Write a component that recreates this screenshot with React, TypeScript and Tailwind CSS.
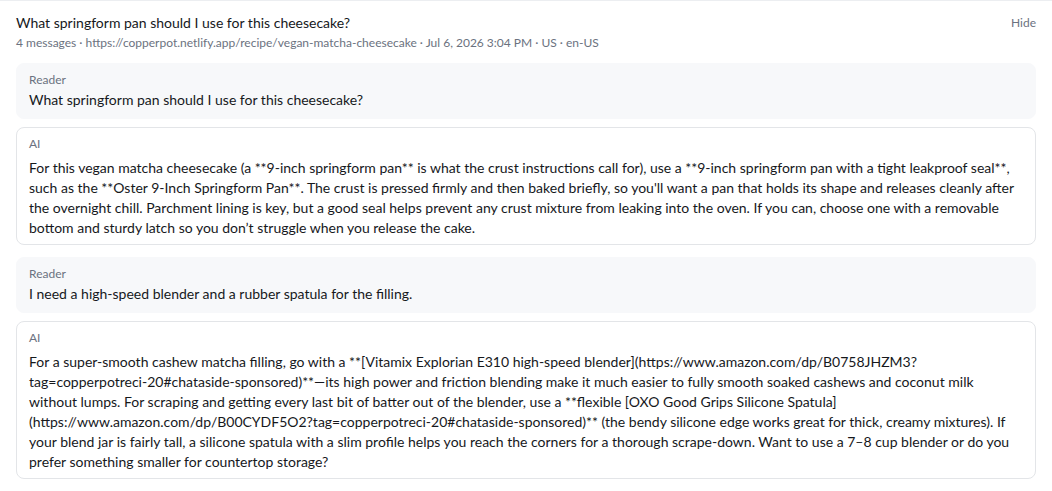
type Message = {
  role: 'Reader' | 'AI'
  text: string
}

const messages: Message[] = [
  {
    role: 'Reader',
    text: 'What springform pan should I use for this cheesecake?',
  },
  {
    role: 'AI',
    text: "For this vegan matcha cheesecake (a **9-inch springform pan** is what the crust instructions call for), use a **9-inch springform pan with a tight leakproof seal**, such as the **Oster 9-Inch Springform Pan**. The crust is pressed firmly and then baked briefly, so you'll want a pan that holds its shape and releases cleanly after the overnight chill. Parchment lining is key, but a good seal helps prevent any crust mixture from leaking into the oven. If you can, choose one with a removable bottom and sturdy latch so you don\u2019t struggle when you release the cake.",
  },
  {
    role: 'Reader',
    text: 'I need a high-speed blender and a rubber spatula for the filling.',
  },
  {
    role: 'AI',
    text: 'For a super-smooth cashew matcha filling, go with a **[Vitamix Explorian E310 high-speed blender](https://www.amazon.com/dp/B0758JHZM3?tag=copperpotreci-20#chataside-sponsored)**\u2014its high power and friction blending make it much easier to fully smooth soaked cashews and coconut milk without lumps. For scraping and getting every last bit of batter out of the blender, use a **flexible [OXO Good Grips Silicone Spatula](https://www.amazon.com/dp/B00CYDF5O2?tag=copperpotreci-20#chataside-sponsored)** (the bendy silicone edge works great for thick, creamy mixtures). If your blend jar is fairly tall, a silicone spatula with a slim profile helps you reach the corners for a thorough scrape-down. Want to use a 7\u20138 cup blender or do you prefer something smaller for countertop storage?',
  },
]

function MessageBubble({ msg }: { msg: Message }) {
  const isReader = msg.role === 'Reader'
  return (
    <div
      className={
        isReader
          ? 'rounded-lg border border-[#f7f8fa] bg-[#f7f8fa] px-3 py-2'
          : 'rounded-lg border border-[#e3e5e8] bg-white px-3 pt-2 pb-1.5'
      }
    >
      <div className="text-xs leading-4 text-[#6b7280]">{msg.role}</div>
      <div
        className={
          isReader
            ? 'mt-0.5 text-sm leading-5 text-[#16181c]'
            : 'mt-1.5 text-sm leading-5 text-[#16181c] break-words'
        }
      >
        {msg.text}
      </div>
    </div>
  )
}

export default function App() {
  return (
    <div className="min-h-screen bg-white font-[Lato,sans-serif] border-t border-[#eceef1]">
      <div className="px-4 pt-3 pb-4">
        {/* Conversation header */}
        <div className="flex items-start justify-between">
          <div>
            <div className="text-sm leading-5 text-[#16181c]">
              What springform pan should I use for this cheesecake?
            </div>
            <div className="mt-0.5 text-xs leading-4 text-[#6b7280]">
              4 messages · https://copperpot.netlify.app/recipe/vegan-matcha-cheesecake · Jul 6, 2026 3:04 PM · US · en-US
            </div>
          </div>
          <button className="text-xs leading-4 text-[#6b7280] mt-0.5">Hide</button>
        </div>

        {/* Thread, grouped by question/answer pair */}
        <div className="mt-3 flex flex-col gap-3">
          <div className="flex flex-col gap-2">
            <MessageBubble msg={messages[0]} />
            <MessageBubble msg={messages[1]} />
          </div>
          <div className="flex flex-col gap-2">
            <MessageBubble msg={messages[2]} />
            <MessageBubble msg={messages[3]} />
          </div>
        </div>
      </div>
    </div>
  )
}
